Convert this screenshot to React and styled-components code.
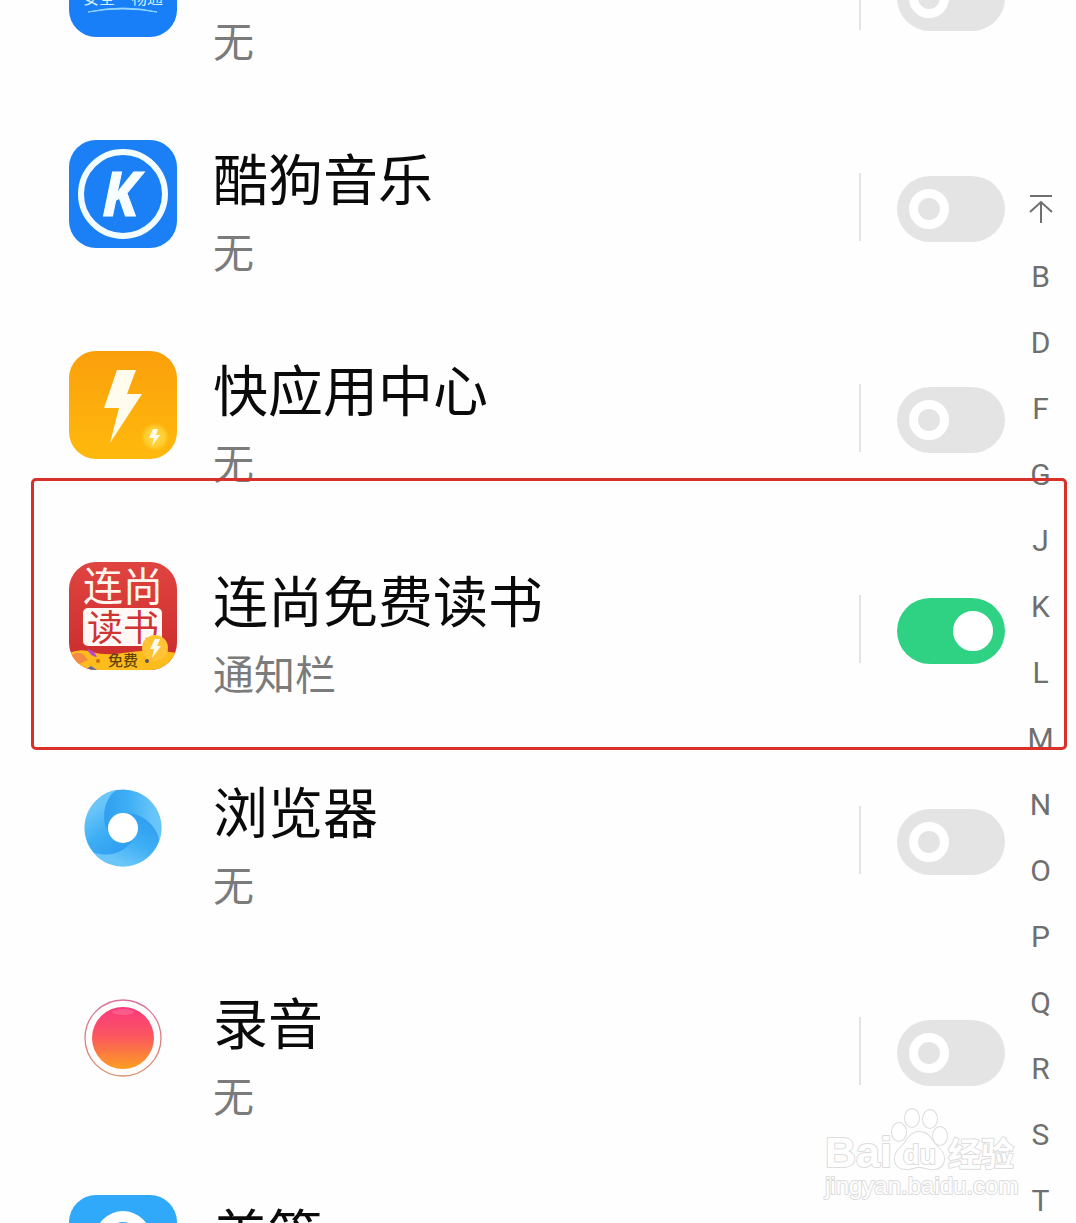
import { useState } from "react";
import styled, { createGlobalStyle } from "styled-components";

const GlobalStyle = createGlobalStyle`
  *,
  *::before {
    box-sizing: border-box;
  }

  body {
    margin: 0;
    background: #fefefe;
    font-family: Roboto, "Noto Sans CJK SC", sans-serif;
  }
`;

const Screen = styled.main`
  position: relative;
  display: flex;
  height: 100vh;
  overflow: hidden;
`;

const List = styled.ul`
  flex: 1;
  margin: -108px 0 0;
  padding: 0;
  list-style: none;
`;

const Row = styled.li`
  display: flex;
  align-items: center;
  height: 211px;
  padding-left: 69px;
`;

const AppIcon = styled.svg`
  flex: none;
  align-self: flex-start;
  width: 108px;
  height: 108px;
  margin-top: 37px;
  border-radius: ${({ $round }) => ($round ? "27px" : "0")};
`;

const Info = styled.div`
  flex: 1;
  align-self: flex-start;
  margin-left: 36px;
  padding-top: 33px;
  font-family: "Noto Sans CJK SC", sans-serif;
`;

const Title = styled.label`
  display: block;
  font-size: 55px;
  line-height: 80px;
  color: #0a0a0a;
`;

const Status = styled.div`
  font-size: 41px;
  line-height: 68px;
  color: #7b7b7b;
`;

const Divider = styled.span`
  width: 2px;
  height: 68px;
  margin: 0 36px 4px 0;
  background: #e4e4e4;
`;

const Switch = styled.input`
  appearance: none;
  display: flex;
  align-items: center;
  justify-content: flex-start;
  width: 108px;
  height: 66px;
  margin: 0;
  padding: 0 12px;
  border-radius: 33px;
  background: #e4e4e4;
  cursor: pointer;

  &::before {
    content: "";
    width: 40px;
    height: 40px;
    border: 9px solid #fff;
    border-radius: 50%;
  }

  &:checked {
    justify-content: flex-end;
    background: #2fd283;
  }

  &:checked::before {
    background: #fff;
  }
`;

const Index = styled.nav`
  display: flex;
  flex-direction: column;
  width: 71px;
  padding-top: 177px;
`;

const IndexLink = styled.a`
  display: flex;
  flex: none;
  align-items: center;
  justify-content: center;
  height: 66px;
  font-size: 30px;
  color: #6f6f6f;
  text-decoration: none;
`;

const Highlight = styled.div`
  position: absolute;
  top: 478px;
  left: 31px;
  right: 9px;
  height: 272px;
  border: 3px solid #d9302a;
  border-radius: 5px;
  pointer-events: none;
`;

const Watermark = styled.svg`
  position: absolute;
  right: 51px;
  bottom: 18px;
  width: 205px;
  height: 105px;
  pointer-events: none;
`;

const bolt = "M48 19H67L58 43H73L41 92L50 57H35Z";

function TrafficIcon() {
  return (
    <AppIcon viewBox="0 0 108 108" $round aria-hidden="true">
      <rect width="108" height="108" fill="#187ff8" />
      <text
        x="54"
        y="75"
        textAnchor="middle"
        fontSize="16"
        fill="#d5efff"
        fontFamily="Noto Sans CJK SC"
      >
        安全·畅通
      </text>
      <path d="M19 83Q54 75 88 83Q54 77 19 83Z" fill="#aee4ff" stroke="#8fd4ff" />
    </AppIcon>
  );
}

function KugouIcon() {
  return (
    <AppIcon viewBox="0 0 108 108" $round aria-hidden="true">
      <rect width="108" height="108" fill="#1b80f6" />
      <circle cx="54" cy="54" r="42" fill="none" stroke="#f3fdff" strokeWidth="6" />
      <text
        x="33"
        y="76"
        fontSize="60"
        fontWeight="700"
        fontStyle="italic"
        fill="#f8feff"
        stroke="#f8feff"
        fontFamily="Open Sans"
      >
        K
      </text>
    </AppIcon>
  );
}

function QuickAppIcon() {
  return (
    <AppIcon viewBox="0 0 108 108" $round aria-hidden="true">
      <defs>
        <linearGradient id="quick-fill" x1="0" y1="0" x2="0" y2="1">
          <stop offset="0" stopColor="#fa9f0b" />
          <stop offset="1" stopColor="#ffb90d" />
        </linearGradient>
        <radialGradient id="quick-glow">
          <stop offset="0" stopColor="#ffdc50" />
          <stop offset="0.7" stopColor="#ffcb2c" />
          <stop offset="1" stopColor="#ffb90d" stopOpacity="0" />
        </radialGradient>
      </defs>
      <rect width="108" height="108" fill="url(#quick-fill)" />
      <path d={bolt} fill="#fffced" />
      <circle cx="86" cy="86" r="15" fill="url(#quick-glow)" />
      <path d="M84 78H89L87 84H91L83 95L85 87H80Z" fill="#fffced" />
    </AppIcon>
  );
}

function ReaderIcon() {
  return (
    <AppIcon viewBox="0 0 108 108" $round aria-hidden="true">
      <defs>
        <linearGradient id="reader-fill" x1="0" y1="0" x2="0" y2="1">
          <stop offset="0" stopColor="#e04440" />
          <stop offset="1" stopColor="#c92b2b" />
        </linearGradient>
      </defs>
      <rect width="108" height="108" fill="url(#reader-fill)" />
      <g fontFamily="Noto Sans CJK SC" textAnchor="middle">
        <text x="54" y="39" fontSize="40" fill="#fff6f0">
          连尚
        </text>
        <rect x="14" y="46" width="79" height="38" rx="5" fill="#fff8f4" />
        <text x="54" y="79" fontSize="36" fill="#cf3435">
          读书
        </text>
        <path
          d="M0 91Q12 86 22 90Q38 94 54 91Q84 86 108 91V108H0Z"
          fill="#fcbd1c"
        />
        <path d="M0 96Q6 88 14 92L19 98L8 103L0 102Z" fill="#f58a43" />
        <path d="M18 87Q25 88 28 95Q22 95 18 87Z" fill="#b34bd0" />
        <path d="M16 108L22 104L28 108Z" fill="#6863a5" />
        <circle cx="29" cy="99" r="2" fill="#c76c1b" />
        <circle cx="78" cy="99" r="2" fill="#625064" />
        <text x="54" y="104" fontSize="15" fontWeight="500" fill="#65430d">
          免费
        </text>
      </g>
      <circle cx="86" cy="86" r="13" fill="#ffc334" />
      <path d="M86 77H91L88 84H92L83 96L85 87H81Z" fill="#fffced" />
    </AppIcon>
  );
}

function BrowserIcon() {
  return (
    <AppIcon viewBox="-54 -55 108 108" aria-hidden="true">
      <defs>
        <linearGradient
          id="blade-fill"
          gradientUnits="userSpaceOnUse"
          x1="-18"
          y1="-6"
          x2="32"
          y2="-10"
        >
          <stop offset="0" stopColor="#2f9ff0" />
          <stop offset="0.5" stopColor="#3eaef5" />
          <stop offset="1" stopColor="#6ac6f9" />
        </linearGradient>
      </defs>
      <circle r="38" fill="#3ba9f2" />
      {[240, 0, 120].map((angle) => (
        <path
          key={angle}
          transform={`rotate(${angle})`}
          d="M-6 -38C-18 -32 -24 -8 -12 9A15 15 0 0 1 -2 -15C19 -17 33 -3 36 14A38.5 38.5 0 0 0 -6 -38Z"
          fill="url(#blade-fill)"
        />
      ))}
      <circle r="15" fill="#fff" />
    </AppIcon>
  );
}

function RecorderIcon() {
  return (
    <AppIcon viewBox="-54 -54 108 108" aria-hidden="true">
      <defs>
        <linearGradient id="record-fill" x1="0" y1="0" x2="0" y2="1">
          <stop offset="0" stopColor="#f93a7d" />
          <stop offset="0.45" stopColor="#fb5460" />
          <stop offset="1" stopColor="#fd9e22" />
        </linearGradient>
        <linearGradient id="record-ring" x1="0" y1="0" x2="0" y2="1">
          <stop offset="0" stopColor="#d9719f" />
          <stop offset="1" stopColor="#d98d68" />
        </linearGradient>
      </defs>
      <circle r="38" fill="#fffdfc" stroke="url(#record-ring)" strokeWidth="1.3" />
      <circle r="31" fill="url(#record-fill)" />
      <ellipse cy="-26" rx="11" ry="3" fill="#fff" opacity="0.15" />
    </AppIcon>
  );
}

function MeipianIcon() {
  return (
    <AppIcon viewBox="0 0 108 108" $round aria-hidden="true">
      <rect width="108" height="108" fill="#31a9fa" />
      <circle cx="54" cy="44" r="28" fill="#fff" />
      <circle cx="54" cy="44" r="17" fill="#31a9fa" />
    </AppIcon>
  );
}

const apps = [
  { id: "traffic", name: "交管12123", status: "无", Icon: TrafficIcon },
  { id: "kugou", name: "酷狗音乐", status: "无", Icon: KugouIcon },
  { id: "quick", name: "快应用中心", status: "无", Icon: QuickAppIcon },
  { id: "reader", name: "连尚免费读书", status: "通知栏", Icon: ReaderIcon, on: true },
  { id: "browser", name: "浏览器", status: "无", Icon: BrowserIcon },
  { id: "recorder", name: "录音", status: "无", Icon: RecorderIcon },
  { id: "meipian", name: "美篇", status: "无", Icon: MeipianIcon },
];

const letters = "BDFGJKLMNOPQRST".split("");

function AppRow({ id, name, status, Icon, on = false }) {
  const [enabled, setEnabled] = useState(on);

  return (
    <Row id={id}>
      <Icon />
      <Info>
        <Title htmlFor={`${id}-switch`}>{name}</Title>
        <Status>{status}</Status>
      </Info>
      <Divider />
      <Switch
        id={`${id}-switch`}
        type="checkbox"
        role="switch"
        checked={enabled}
        onChange={(e) => setEnabled(e.target.checked)}
      />
    </Row>
  );
}

function BaiduWatermark() {
  return (
    <Watermark viewBox="820 1100 205 105" aria-label="Baidu 经验">
      <g
        fill="#fff"
        stroke="#dcdcdc"
        strokeWidth="2"
        strokeLinejoin="round"
        paintOrder="stroke"
        fontFamily="Liberation Sans"
      >
        <text x="825" y="1167" fontSize="43" fontWeight="700">
          Bai
        </text>
        <g strokeWidth="2">
          <ellipse cx="899" cy="1132" rx="7" ry="9" />
          <ellipse cx="912" cy="1118" rx="7" ry="9" />
          <ellipse cx="930" cy="1119" rx="7" ry="9" />
          <ellipse cx="940" cy="1136" rx="7" ry="9" />
          <path d="M919 1132C912 1132 908 1138 904 1144C899 1149 895 1152 895 1159C895 1166 900 1169 906 1169C912 1169 914 1167 919 1167C924 1167 927 1169 933 1169C940 1169 944 1165 944 1158C944 1151 938 1148 934 1143C930 1137 927 1132 919 1132Z" />
        </g>
        <text x="903" y="1164" fontSize="27" fontWeight="700">
          du
        </text>
        <text
          x="948"
          y="1166"
          fontSize="33"
          fontWeight="700"
          fontFamily="Noto Sans CJK SC"
        >
          经验
        </text>
        <text x="825" y="1194" fontSize="24">
          jingyan.baidu.com
        </text>
      </g>
    </Watermark>
  );
}

export default function App() {
  return (
    <>
      <GlobalStyle />
      <Screen>
        <List>
          {apps.map((app) => (
            <AppRow key={app.id} {...app} />
          ))}
        </List>
        <Index aria-label="字母索引">
          <IndexLink href="#traffic" aria-label="返回顶部">
            <svg width="24" height="30" viewBox="0 0 24 30" fill="none" stroke="#6f6f6f" strokeWidth="2">
              <path d="M1 1H23M12 7V28M1 17L12 7L23 17" />
            </svg>
          </IndexLink>
          {letters.map((letter) => (
            <IndexLink key={letter} href={`#${letter}`}>
              {letter}
            </IndexLink>
          ))}
        </Index>
        <Highlight />
        <BaiduWatermark />
      </Screen>
    </>
  );
}
